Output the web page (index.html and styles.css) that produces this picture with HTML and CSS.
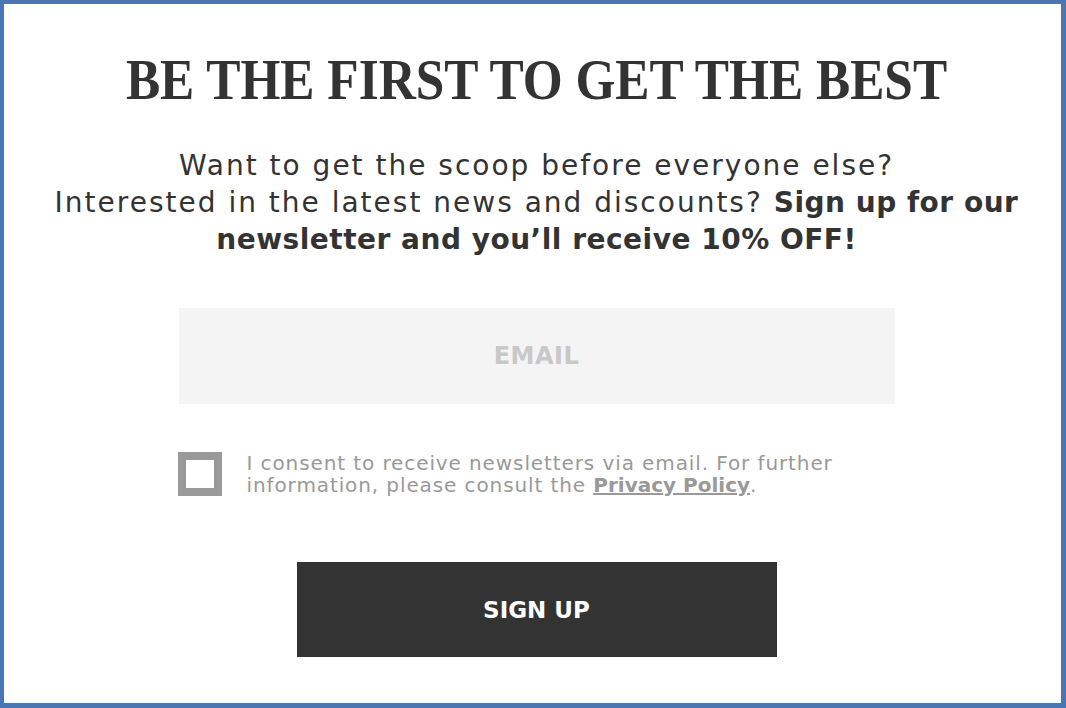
FILE: index.html
```html
<!DOCTYPE html>
<html>

<head>
    <title>Newsletter Sign Up</title>
    <link rel="stylesheet" href="styles.css">
</head>

<body>
    <div class="popup">
        <h1 class="title">BE THE FIRST TO GET THE BEST</h1>
        <p class="intro">
            Want to get the scoop before everyone else?<br>
            Interested in the latest news and discounts? <strong>Sign up for our<br>newsletter and you’ll receive 10% OFF!</strong>
        </p>
        <form class="signup-form" onsubmit="return false">
            <input class="email-input" type="email" placeholder="EMAIL">
            <label class="consent">
                <span class="checkbox"></span>
                <span class="consent-text">I consent to receive newsletters via email. For further<br>information, please consult the <a href="#">Privacy Policy</a>.</span>
            </label>
            <button class="signup-button" type="submit">SIGN UP</button>
        </form>
    </div>
</body>

</html>
```

FILE: styles.css
```css
html,
body {
    margin: 0;
    height: 100%;
}

body {
    font-family: 'DejaVu Sans', sans-serif;
    background-color: #fff;
}

.popup {
    box-sizing: border-box;
    height: 708px;
    border-style: solid;
    border-color: #4a77b4;
    border-width: 4px 5px 5px 4px;
    text-align: center;
    padding: 46px 0 0 8px;
}

.title {
    margin: 0;
    font-family: 'Liberation Serif', serif;
    font-weight: bold;
    font-size: 57px;
    line-height: 60px;
    color: #333;
    transform: scaleX(0.9);
    white-space: nowrap;
}

.intro {
    margin: 37px 0 0;
    font-size: 28px;
    line-height: 37px;
    letter-spacing: 2px;
    color: #333;
    white-space: nowrap;
}

.intro strong {
    letter-spacing: 0.5px;
}

.signup-form {
    display: flex;
    flex-direction: column;
    align-items: center;
}

.email-input {
    box-sizing: border-box;
    width: 716px;
    height: 96px;
    margin-top: 50px;
    border: none;
    background-color: #f4f4f4;
    text-align: center;
    font-family: inherit;
    font-weight: bold;
    font-size: 24px;
    letter-spacing: 0.5px;
    color: #333;
}

.email-input::placeholder {
    color: #c8c8c8;
}

.consent {
    display: flex;
    align-items: center;
    width: 716px;
    margin-top: 48px;
    text-align: left;
}

.checkbox {
    box-sizing: border-box;
    flex: none;
    width: 44px;
    height: 44px;
    margin-left: -1px;
    border: 8px solid #999;
}

.consent-text {
    margin-left: 25px;
    font-size: 20px;
    line-height: 22px;
    letter-spacing: 0.9px;
    color: #999;
    white-space: nowrap;
}

.consent-text a {
    color: #999;
    font-weight: bold;
    letter-spacing: 0;
}

.signup-button {
    width: 480px;
    height: 95px;
    margin-top: 66px;
    border: none;
    background-color: #333;
    color: #fff;
    font-family: inherit;
    font-weight: bold;
    font-size: 23px;
    cursor: pointer;
}
```
